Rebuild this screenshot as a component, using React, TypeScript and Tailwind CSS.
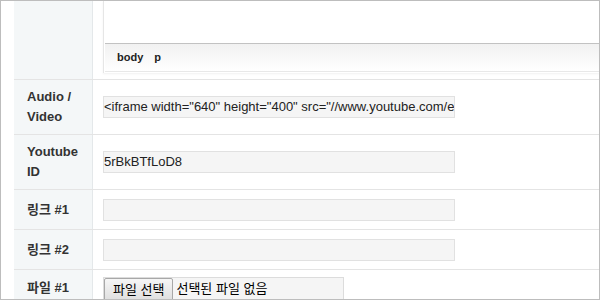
const font = { fontFamily: '"Liberation Sans", Arial, "Noto Sans CJK KR", sans-serif' };

const Label = ({ children }: { children: React.ReactNode }) => (
  <div className="w-[79px] shrink-0 bg-[#f4f7f8] border-r border-[#e4e8ea] pl-[13px] pr-2 flex items-center text-[13px] leading-[20px] font-bold text-[#333]">
    <div>{children}</div>
  </div>
);

const TextField = ({ value }: { value?: string }) => (
  <div className="w-[352px] h-[22px] bg-[#f5f5f5] border border-[#e1e1e1] overflow-hidden whitespace-nowrap text-[13px] leading-[20px] text-[#222]">
    {value}
  </div>
);

export default function App() {
  const rows = [
    { label: <>Audio /<br />Video</>, value: '<iframe width="640" height="400" src="//www.youtube.com/embed/5rBkBTfLoD8" frameborder="0" allowfullscreen></iframe>', h: "h-[54px]" },
    { label: <>Youtube<br />ID</>, value: "5rBkBTfLoD8", h: "h-[54px]" },
    { label: "링크 #1", value: "", h: "h-[39px]" },
    { label: "링크 #2", value: "", h: "h-[39px]" },
  ];

  return (
    <div style={font} className="w-[600px] h-[300px] border border-[#bdbdbd] bg-white overflow-hidden pl-[13px]">
      {/* editor row */}
      <div className="flex h-[79px] border-b border-[#e4e4e4]">
        <Label>{null}</Label>
        <div className="flex-1 pl-[10px] pb-[6px] overflow-hidden">
          <div className="h-[72px] border-l border-[#e6e6e6] shadow-[0_1px_2px_rgba(0,0,0,0.06)] flex flex-col">
            <div className="h-[42px] bg-white ml-[1px]" />
            <div className="h-[29px] ml-[1px] border-t border-[#c2c2c2] border-b border-b-[#e8e8e8] bg-gradient-to-b from-[#f1f1f1] to-white flex items-center pl-[12px] gap-[11px] text-[11px] font-bold text-[#222]">
              <span>body</span>
              <span>p</span>
            </div>
          </div>
        </div>
      </div>

      {rows.map((r, i) => (
        <div key={i} className={`flex ${r.h} box-content border-b border-[#e4e4e4]`}>
          <Label>{r.label}</Label>
          <div className="flex-1 pl-[10px] flex items-center">
            <TextField value={r.value} />
          </div>
        </div>
      ))}

      {/* file row */}
      <div className="flex h-[40px]">
        <div className="w-[79px] shrink-0 bg-[#f4f7f8] border-r border-[#e4e8ea] pl-[13px] pt-[8px] text-[13px] leading-[20px] font-bold text-[#333]">
          파일 #1
        </div>
        <div className="flex-1 pl-[10px] pt-[7px]">
          <div className="w-[241px] h-[30px] bg-[#f5f5f5] border border-[#dcdcdc] flex items-start">
            <div className="h-[24px] px-[8px] border border-[#a8a8a8] rounded-[2px] bg-gradient-to-b from-[#f6f6f6] to-[#dedede] text-[13px] leading-[21px] text-black">
              파일 선택
            </div>
            <span className="ml-[3px] text-[13px] leading-[22px] text-black">선택된 파일 없음</span>
          </div>
        </div>
      </div>
    </div>
  );
}
